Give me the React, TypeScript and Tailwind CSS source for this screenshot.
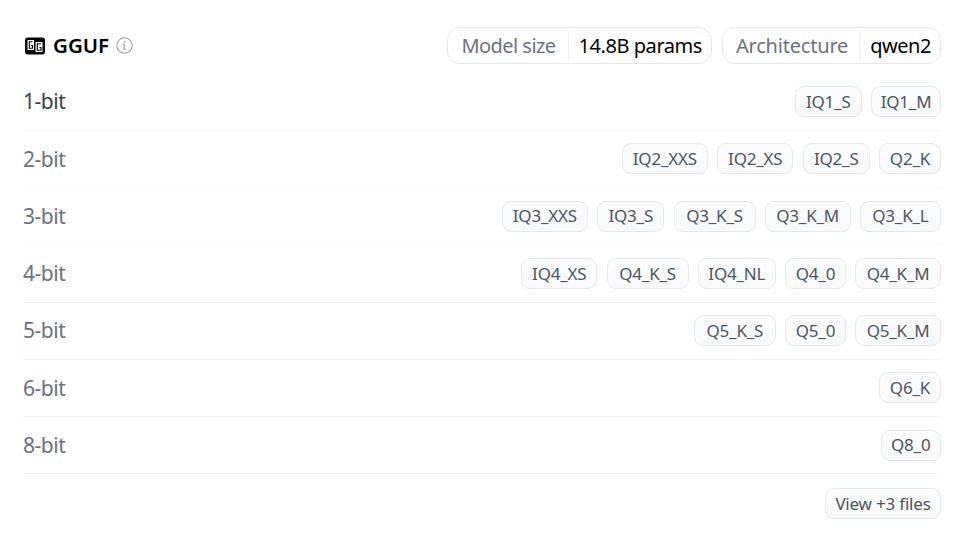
const font = { fontFamily: '"Noto Sans", sans-serif' };

const CHIP_W: Record<string, string> = {
  "IQ1_S": "w-[67.2px]", "IQ1_M": "w-[70px]",
  "IQ2_XXS": "w-[86.2px]", "IQ2_XS": "w-[76.3px]", "IQ2_S": "w-[67.2px]", "Q2_K": "w-[62px]",
  "IQ3_XXS": "w-[86.2px]", "IQ3_S": "w-[67.2px]", "Q3_K_S": "w-[82px]", "Q3_K_M": "w-[85.8px]", "Q3_K_L": "w-[81.3px]",
  "IQ4_XS": "w-[76.3px]", "Q4_K_S": "w-[82px]", "IQ4_NL": "w-[78px]", "Q4_0": "w-[61px]", "Q4_K_M": "w-[85.8px]",
  "Q5_K_S": "w-[82px]", "Q5_0": "w-[61px]", "Q5_K_M": "w-[85.8px]",
  "Q6_K": "w-[62px]", "Q8_0": "w-[60.5px]",
};

const ROWS: { label: string; active?: boolean; chips: string[] }[] = [
  { label: "1-bit", active: true, chips: ["IQ1_S", "IQ1_M"] },
  { label: "2-bit", chips: ["IQ2_XXS", "IQ2_XS", "IQ2_S", "Q2_K"] },
  { label: "3-bit", chips: ["IQ3_XXS", "IQ3_S", "Q3_K_S", "Q3_K_M", "Q3_K_L"] },
  { label: "4-bit", chips: ["IQ4_XS", "Q4_K_S", "IQ4_NL", "Q4_0", "Q4_K_M"] },
  { label: "5-bit", chips: ["Q5_K_S", "Q5_0", "Q5_K_M"] },
  { label: "6-bit", chips: ["Q6_K"] },
  { label: "8-bit", chips: ["Q8_0"] },
];

const Pill = ({ name, value, tight }: { name: string; value: string; tight?: boolean }) => (
  <div className="flex h-[37px] items-center rounded-[13px] border border-[#e5e7eb] bg-white">
    <span className={`flex h-[31px] items-center border-r border-[#f0f1f3] pl-[13px] text-[#6b7280] ${tight ? "pr-[11px] tracking-[-0.2px]" : "pr-[12px] tracking-[-0.55px]"}`}>{name}</span>
    <span className="pl-[10px] pr-[9px] text-black">{value}</span>
  </div>
);

export default function App() {
  return (
    <div className="h-[553px] w-[978px] bg-white pl-[23px] pr-[37px] pt-[27px] text-[20px] tracking-[-0.45px]" style={font}>
      <div className="flex h-[37px] items-center justify-between">
        <div className="flex items-center">
          <svg width="20" height="18" viewBox="0 0 20 18" className="ml-[2px] mr-[8px]">
            <rect x="0" y="0.500" width="20" height="17" rx="3" fill="#000" />
            <rect x="2.500" y="3" width="6.500" height="10" fill="#fff" />
            <rect x="10.500" y="5" width="7" height="10" fill="#fff" />
            <path d="M7.500 4.800H4.300v6.500h3.200V8.500H6M16 6.800h-3.700v6.500H16v-2.800h-1.500" fill="none" stroke="#000" strokeWidth="1.100" />
          </svg>
          <span className="text-[20.500px] font-semibold tracking-normal text-black">GGUF</span>
          <svg width="17" height="17" viewBox="0 0 17 17" className="ml-[7px]" fill="none" stroke="#9ca3af">
            <circle cx="8.500" cy="8.500" r="7.700" strokeWidth="1.100" />
            <path d="M8.500 7.200v5M6.700 12.300h3.600M7 7.200h1.500" strokeWidth="1.100" />
            <circle cx="8.500" cy="4.900" r="0.900" fill="#9ca3af" stroke="none" />
          </svg>
        </div>
        <div className="flex gap-[10px]">
          <Pill name="Model size" value="14.8B params" />
          <Pill name="Architecture" value="qwen2" tight />
        </div>
      </div>
      <div className="pt-[9.500px]">
        {ROWS.map((row) => (
          <div key={row.label} className="flex h-[57.250px] items-center justify-between border-b border-[#f3f4f6]">
            <span className={row.active ? "pt-[1px] text-[21px] text-[#374151]" : "pt-[1px] text-[21px] text-[#6b7280]"}>{row.label}</span>
            <div className="flex gap-[9.2px]">
              {row.chips.map((chip) => (
                <span key={chip} className={`flex h-[31px] items-center justify-center rounded-[9px] border border-[#e5e7eb] bg-gradient-to-b from-[#fbfcfd] to-[#f8f9fb] text-[17px] tracking-[-0.2px] text-[#4b5563] ${CHIP_W[chip]}`}>
                  {chip}
                </span>
              ))}
            </div>
          </div>
        ))}
      </div>
      <div className="flex justify-end pt-[13.500px]">
        <button className="flex h-[31px] w-[116px] items-center justify-center rounded-[9px] border border-[#e5e7eb] bg-gradient-to-b from-[#fbfcfd] to-[#f8f9fb] text-[17px] tracking-[-0.2px] text-[#4b5563]">
          View +3 files
        </button>
      </div>
    </div>
  );
}
